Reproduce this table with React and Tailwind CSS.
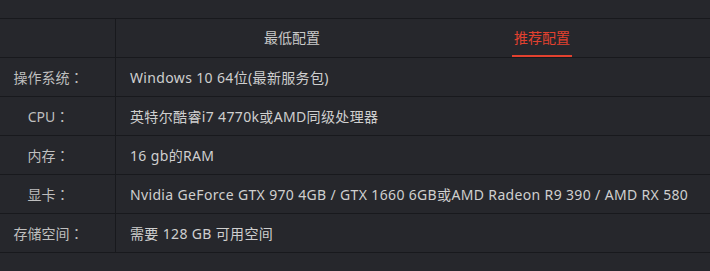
import { useState } from "react";

const rows = [
  { label: "操作系统", value: "Windows 10 64位(最新服务包)" },
  { label: "CPU", value: "英特尔酷睿i7 4770k或AMD同级处理器" },
  { label: "内存", value: "16 gb的RAM" },
  { label: "显卡", value: "Nvidia GeForce GTX 970 4GB / GTX 1660 6GB或AMD Radeon R9 390 / AMD RX 580" },
  { label: "存储空间", value: "需要 128 GB 可用空间" },
];

const tabs = ["最低配置", "推荐配置"];

function App() {
  const [active, setActive] = useState(1);

  return (
    <div
      className="w-[710px] h-[271px] bg-[#26272c] pt-[18px] text-[14px]"
      style={{ fontFamily: '"Noto Sans", "Noto Sans CJK SC", sans-serif' }}
    >
      <div className="border-t border-b border-[#18191d] flex">
        <div className="w-[116px] border-r border-[#18191d] shrink-0" />
        <div className="flex-1 flex justify-center pl-[8px]">
          {tabs.map((tab, i) => (
            <button
              key={tab}
              onClick={() => setActive(i)}
              className="w-[250px] h-[38px] flex justify-center"
            >
              <span
                className={
                  "h-full flex items-center px-[2px] border-b-2 " +
                  (active === i
                    ? "text-[#e2412f] border-[#e2412f]"
                    : "text-[#c9c9c9] border-transparent")
                }
              >
                {tab}
              </span>
            </button>
          ))}
        </div>
      </div>
      {rows.map((row) => (
        <div key={row.label} className="flex h-[39px] border-b border-[#18191d]">
          <div className="w-[116px] shrink-0 border-r border-[#18191d] flex items-center justify-center pr-[18px] pt-px text-[#bfbfbf]">
            {row.label}
            <span style={{ fontFamily: '"Noto Sans CJK TC", sans-serif' }}>：</span>
          </div>
          <div className="flex-1 flex items-center pl-[14px] pt-px tracking-[0.35px] text-[#cfcfcf] whitespace-nowrap">
            {row.value}
          </div>
        </div>
      ))}
    </div>
  );
}

export default App;
